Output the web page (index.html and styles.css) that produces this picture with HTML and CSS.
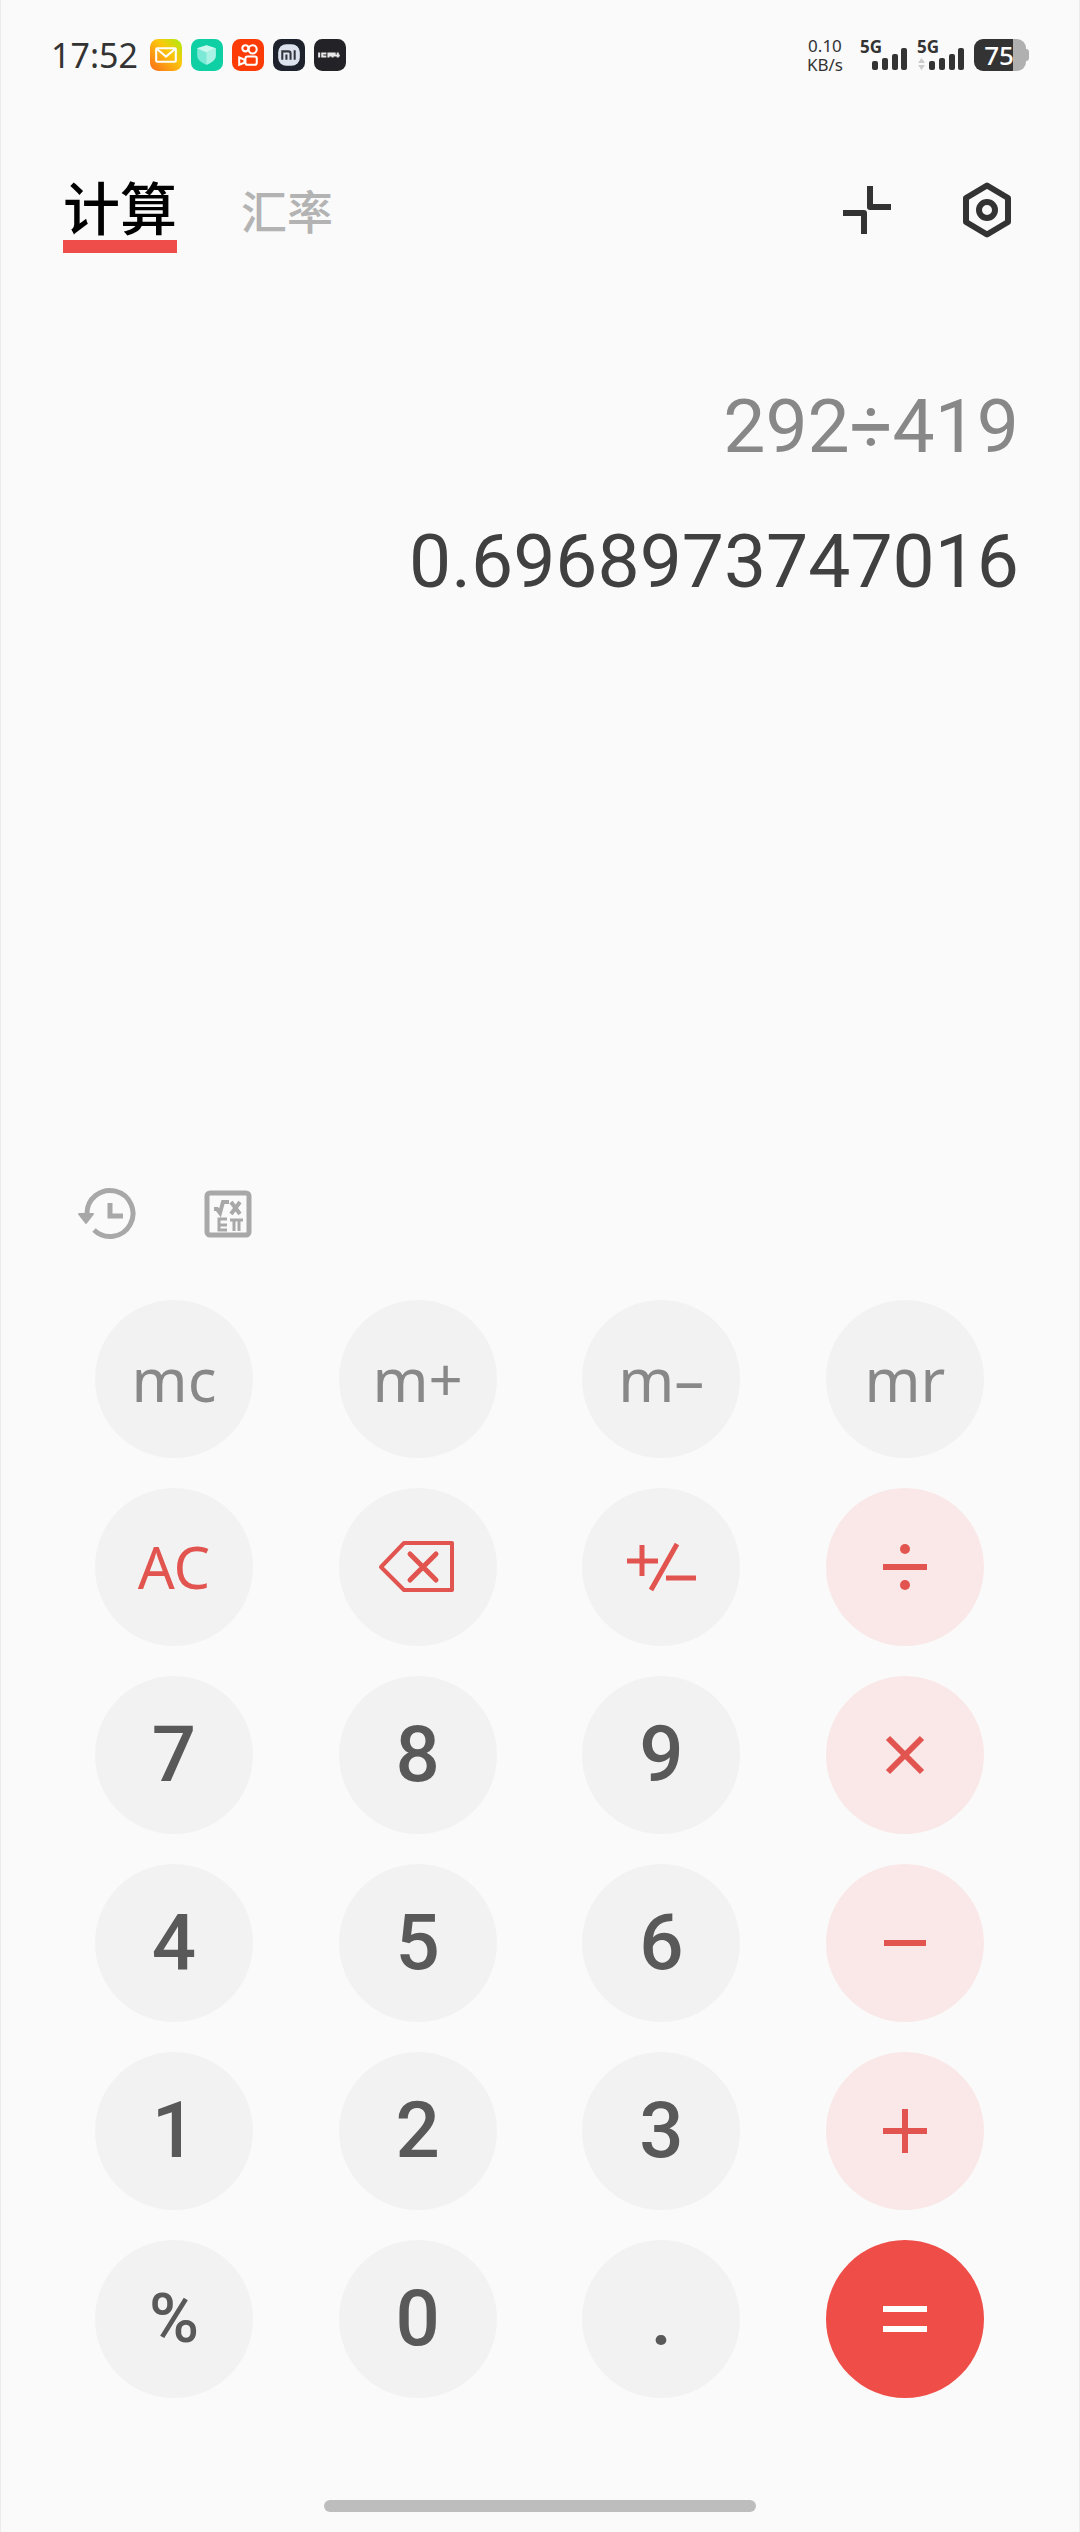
FILE: index.html
```html
<!DOCTYPE html>
<html lang="zh-CN">
<head>
<meta charset="utf-8">
<meta name="viewport" content="width=device-width, initial-scale=1">
<title>计算器</title>
<link rel="stylesheet" href="styles.css">
</head>
<body>
<div class="app">
  <div class="status">
    <div class="status-left">
      <time class="clock">17:52</time>
      <div class="notices">
        <svg class="notice" viewBox="0 0 31 31" aria-hidden="true">
          <defs><linearGradient id="mail" x1="1" y1="0" x2="0" y2="1"><stop offset="0" stop-color="#a8ee10"/><stop offset=".4" stop-color="#fbc80c"/><stop offset="1" stop-color="#fb6a1c"/></linearGradient></defs>
          <rect width="31" height="31" rx="8" fill="url(#mail)"/>
          <rect x="6" y="9" width="19" height="13" rx="1" fill="none" stroke="#fff" stroke-width="2"/>
          <path d="M7 10l8.500 7 8.500-7" fill="none" stroke="#fff" stroke-width="2"/>
        </svg>
        <svg class="notice" viewBox="0 0 31 31" aria-hidden="true">
          <rect width="31" height="31" rx="8" fill="#0fd0a5"/>
          <path d="M6 9l9-3 9 3v7c0 4-4 7-9 9-5-2-9-5-9-9z" fill="#7be9d6"/>
          <path d="M6 9l9-3 9 3-9 4z" fill="#c9f8ef"/>
          <path d="M15 13l9-4v7c0 4-4 7-9 9z" fill="#aaf2e4"/>
        </svg>
        <svg class="notice" viewBox="0 0 31 31" aria-hidden="true">
          <rect width="31" height="31" rx="8" fill="#fc3b06"/>
          <g fill="none" stroke="#fff" stroke-width="2"><circle cx="13" cy="9" r="3"/><circle cx="20" cy="10" r="4"/><rect x="13" y="17" width="11" height="8" rx="2"/><path d="M7 18l5 2v3l-5 2z"/></g>
        </svg>
        <svg class="notice" viewBox="0 0 31 31" aria-hidden="true">
          <rect width="31" height="31" rx="8" fill="#1d222c"/>
          <rect x="5" y="5" width="21" height="21" rx="8" fill="#dce3ef"/>
          <path d="M9 20v-8h6q2 0 2 2v6M13 15v5M21 11v9" fill="none" stroke="#32353c" stroke-width="2"/>
        </svg>
        <svg class="notice" viewBox="0 0 31 31" aria-hidden="true">
          <rect width="31" height="31" rx="8" fill="#232327"/>
          <path d="M5 13v5M12 14H8v3h4M14 18v-4h4v4M14 16h4M20 13v3h5M23 13v5" fill="none" stroke="#e8e8e8" stroke-width="2"/>
        </svg>
      </div>
    </div>
    <div class="status-right">
      <div class="speed"><span>0.10</span><span>KB/s</span></div>
      <div class="signal">
        <span class="net">5G</span>
        <svg class="bars" viewBox="0 0 48 23" aria-hidden="true"><g fill="#333"><rect x="12" y="13" width="6" height="9" rx="2"/><rect x="22" y="10" width="6" height="12" rx="2"/><rect x="32" y="6" width="6" height="16" rx="2"/><rect x="41" y="0" width="6" height="22" rx="2"/></g></svg>
      </div>
      <div class="signal">
        <span class="net">5G</span>
        <svg class="bars" viewBox="0 0 48 23" aria-hidden="true"><path d="M1 15l3.500-5 3.500 5zM1 17l3.500 5 3.500-5z" fill="#ccc"/><g fill="#333"><rect x="12" y="13" width="6" height="9" rx="2"/><rect x="22" y="10" width="6" height="12" rx="2"/><rect x="32" y="6" width="6" height="16" rx="2"/><rect x="41" y="0" width="6" height="22" rx="2"/></g></svg>
      </div>
      <div class="battery"><span class="charge">75</span><span class="nub"></span></div>
    </div>
  </div>

  <header class="header">
    <nav class="tabs">
      <a class="tab tab-active" href="#calc">计算</a>
      <a class="tab" href="#rate">汇率</a>
    </nav>
    <div class="actions">
      <button class="icon-button" type="button" aria-label="小窗">
        <svg viewBox="0 0 56 56" width="56" height="56"><g fill="none" stroke="#333" stroke-width="6" stroke-linejoin="round"><path d="M31 4v21h21"/><path d="M4 31h21v21"/></g></svg>
      </button>
      <button class="icon-button" type="button" aria-label="设置">
        <svg viewBox="0 0 56 56" width="56" height="56"><g fill="none" stroke="#333" stroke-width="6" stroke-linejoin="round"><path d="M28 3.500l21 12.500v24l-21 12.500-21-12.500v-24z"/><circle cx="28" cy="28" r="8"/></g></svg>
      </button>
    </div>
  </header>

  <main class="display">
    <output class="line expression">292÷419</output>
    <output class="line result">0.6968973747016</output>
  </main>

  <div class="tools">
    <button class="icon-button" type="button" aria-label="历史记录">
      <svg viewBox="0 0 60 60" width="60" height="60"><path d="M10 30A23 23 0 1 1 17 46" fill="none" stroke="#a8a8a8" stroke-width="5"/><path d="M2 30h14l-7 9z" fill="#a8a8a8" stroke="#a8a8a8" stroke-width="2" stroke-linejoin="round"/><path d="M33 19v13h13" fill="none" stroke="#a8a8a8" stroke-width="5"/></svg>
    </button>
    <button class="icon-button" type="button" aria-label="科学计算">
      <svg viewBox="0 0 60 60" width="60" height="60"><g fill="none" stroke="#a8a8a8"><rect x="10" y="9" width="42" height="42" rx="3" stroke-width="5"/><path d="M17 25h3l3 4 3-11h6M34 18l9 12M43 18l-9 12" stroke-width="4"/><path d="M30 35h-8v11h8M22 41h8M33 36h13M37 36v11M42 36v11" stroke-width="3"/></g></svg>
    </button>
  </div>

  <section class="keypad" aria-label="键盘">
    <button class="key memory" type="button">mc</button>
    <button class="key memory" type="button">m+</button>
    <button class="key memory" type="button">m–</button>
    <button class="key memory" type="button">mr</button>

    <button class="key clear" type="button">AC</button>
    <button class="key" type="button" aria-label="退格"><svg viewBox="0 0 80 80" width="80" height="80"><g fill="none" stroke="#e2544f" stroke-width="4" stroke-linejoin="round" stroke-linecap="round"><path d="M3 40L26 16h48v47H26z"/><path d="M32 27l26 26M58 27L32 53" stroke-width="5"/></g></svg></button>
    <button class="key" type="button" aria-label="正负号"><svg viewBox="0 0 80 80" width="80" height="80"><path d="M6 34h31M21 18v31M45 51h30M56 17L30 63" fill="none" stroke="#e2544f" stroke-width="5"/></svg></button>
    <button class="key operator" type="button" aria-label="除"><svg viewBox="0 0 80 80" width="80" height="80"><path d="M18 40h44" stroke="#e2544f" stroke-width="6"/><g fill="#e2544f"><circle cx="40" cy="22" r="5"/><circle cx="40" cy="58" r="5"/></g></svg></button>

    <button class="key digit" type="button">7</button>
    <button class="key digit" type="button">8</button>
    <button class="key digit" type="button">9</button>
    <button class="key operator" type="button" aria-label="乘"><svg viewBox="0 0 80 80" width="80" height="80"><path d="M23 23l34 34M57 23L23 57" stroke="#e2544f" stroke-width="6"/></svg></button>

    <button class="key digit" type="button">4</button>
    <button class="key digit" type="button">5</button>
    <button class="key digit" type="button">6</button>
    <button class="key operator" type="button" aria-label="减"><svg viewBox="0 0 80 80" width="80" height="80"><path d="M19 40h42" stroke="#e2544f" stroke-width="6"/></svg></button>

    <button class="key digit" type="button">1</button>
    <button class="key digit" type="button">2</button>
    <button class="key digit" type="button">3</button>
    <button class="key operator" type="button" aria-label="加"><svg viewBox="0 0 80 80" width="80" height="80"><path d="M18 40h44M40 18v44" stroke="#e2544f" stroke-width="6"/></svg></button>

    <button class="key percent" type="button">%</button>
    <button class="key digit" type="button">0</button>
    <button class="key digit" type="button">.</button>
    <button class="key equals" type="button" aria-label="等于"><svg viewBox="0 0 80 80" width="80" height="80"><path d="M18 30h44M18 50h44" stroke="#fff" stroke-width="6"/></svg></button>
  </section>

  <div class="home-bar"></div>
</div>
</body>
</html>
```
FILE: styles.css
```css
* { box-sizing: border-box; }

body {
  margin: 0;
  background: #fafafa;
  font-family: "Noto Sans", "Noto Sans CJK SC", sans-serif;
}

.app {
  display: flex;
  flex-direction: column;
  min-height: 100vh;
  border: solid #ececec;
  border-width: 0 1px;
}

button {
  padding: 0;
  border: 0;
  background: none;
  font-family: inherit;
  cursor: pointer;
}

svg { display: block; }

/* Status bar */
.status {
  display: flex;
  justify-content: space-between;
  align-items: center;
  height: 110px;
  padding: 0 50px;
}

.status-left,
.status-right,
.notices {
  display: flex;
  align-items: center;
}

.status-left { gap: 12px; }
.notices { gap: 9px; }
.notice { width: 32px; height: 32px; }

.clock {
  font-size: 34px;
  line-height: 40px;
  color: #333;
}

.status-right { gap: 9px; }

.speed {
  display: flex;
  flex-direction: column;
  align-items: center;
  margin-right: 8px;
  font-size: 17px;
  line-height: 19px;
  color: #333;
}

.signal {
  display: flex;
  flex-direction: column;
  width: 48px;
  height: 32px;
}

.net {
  font-size: 17px;
  font-weight: 700;
  line-height: 16px;
  color: #333;
}

.bars { width: 48px; height: 23px; margin-top: -7px; }

.battery { display: flex; align-items: center; }

.charge {
  width: 52px;
  height: 32px;
  padding-right: 12px;
  border-radius: 9px;
  background: linear-gradient(90deg, #333 39px, #b0b0b0 39px);
  font-size: 26px;
  font-weight: 500;
  line-height: 32px;
  text-align: right;
  color: #fff;
}

.nub {
  width: 3px;
  height: 12px;
  border-radius: 0 3px 3px 0;
  background: #b0b0b0;
}

/* Header */
.header {
  display: flex;
  justify-content: space-between;
  align-items: center;
  height: 200px;
  padding: 0 64px 0 62px;
}

.tabs {
  display: flex;
  align-items: center;
  gap: 64px;
}

.tab {
  padding-bottom: 2px;
  font-family: "Noto Sans CJK SC", sans-serif;
  font-size: 46px;
  font-weight: 500;
  line-height: 60px;
  color: #b3b3b3;
  text-decoration: none;
}

.tab-active {
  padding: 8px 0 5px;
  border-bottom: 13px solid #ef4d4a;
  font-size: 57px;
  color: #000;
}

.actions { display: flex; gap: 64px; }

/* Display */
.display {
  display: flex;
  flex: 1;
  flex-direction: column;
  gap: 35px;
  padding: 66px 60px 0;
  text-align: right;
}

.line {
  font-family: Roboto, sans-serif;
  font-size: 75px;
  line-height: 100px;
}

.expression { color: #888; }
.result { color: #404040; }

.tools {
  display: flex;
  gap: 60px;
  padding: 0 76px;
  margin-bottom: 56px;
}

/* Keypad */
.keypad {
  display: grid;
  grid-template-columns: repeat(4, 158px);
  justify-content: space-between;
  row-gap: 30px;
  padding: 0 95px 0 94px;
}

.key {
  display: flex;
  align-items: center;
  justify-content: center;
  height: 158px;
  border-radius: 50%;
  background: #f2f2f2;
  line-height: 100px;
}

.memory { font-size: 60px; color: #888; }
.clear { font-size: 58px; color: #e2544f; }

.digit,
.percent {
  font-family: Roboto, sans-serif;
  font-size: 78px;
  font-weight: 500;
  color: #595959;
}

.percent { font-size: 68px; }

.operator { background: #fae8e8; }
.equals { background: #ef4d48; }

.home-bar {
  align-self: center;
  width: 40%;
  height: 12px;
  margin: 102px 0 20px;
  border-radius: 6px;
  background: #bdbdbd;
}
```
